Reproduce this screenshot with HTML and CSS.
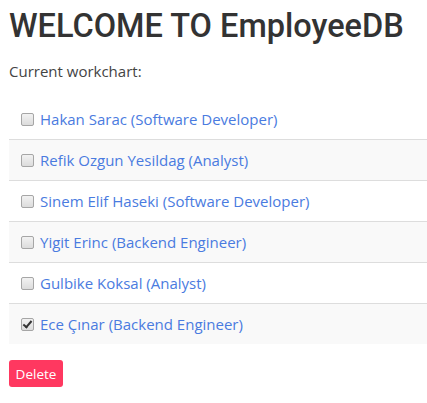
FILE: index.html
```html
<!DOCTYPE html>
<html>
<head>
<meta charset="utf-8">
<link rel="stylesheet" href="styles.css">
</head>
<body>
<div class="page">
  <h1 class="title">WELCOME TO EmployeeDB</h1>
  <p class="subtitle">Current workchart:</p>
  <table class="chart">
    <tbody>
      <tr><td><label class="item"><input type="checkbox"><a class="name">Hakan Sarac (Software Developer)</a></label></td></tr>
      <tr><td><label class="item"><input type="checkbox"><a class="name">Refik Ozgun Yesildag (Analyst)</a></label></td></tr>
      <tr><td><label class="item"><input type="checkbox"><a class="name">Sinem Elif Haseki (Software Developer)</a></label></td></tr>
      <tr><td><label class="item"><input type="checkbox"><a class="name">Yigit Erinc (Backend Engineer)</a></label></td></tr>
      <tr><td><label class="item"><input type="checkbox"><a class="name">Gulbike Koksal (Analyst)</a></label></td></tr>
      <tr><td><label class="item"><input type="checkbox" checked><a class="name">Ece Çınar (Backend Engineer)</a></label></td></tr>
    </tbody>
  </table>
  <button class="delete">Delete</button>
</div>
</body>
</html>
```
FILE: styles.css
```css
html, body {
  margin: 0;
  padding: 0;
  background: #fff;
}
body {
  font-family: "Open Sans", "Noto Sans", sans-serif;
  color: #333;
  font-size: 15px;
}
.page {
  padding: 0 0 0 9px;
}
.title {
  margin: 0;
  padding-top: 6px;
  font-family: Roboto, "Open Sans", sans-serif;
  font-size: 32.5px;
  font-weight: 500;
  line-height: 40px;
  color: #333;
  white-space: nowrap;
}
.subtitle {
  margin: 14px 0 0 0;
  line-height: 22px;
  color: #444;
}
.chart {
  width: 100%;
  border-collapse: collapse;
  margin-top: 17px;
}
.chart td {
  padding: 0 12px;
  height: 40px;
  border-top: 1px solid #ddd;
}
.chart tr:first-child td {
  border-top: none;
}
.chart tr:nth-child(even) td {
  background: #f9f9f9;
}
.item {
  display: flex;
  align-items: center;
}
.item input {
  -webkit-appearance: none;
  appearance: none;
  margin: 0 6px 0 0;
  width: 13px;
  height: 13px;
  border: 1px solid #a6a6a6;
  border-radius: 2px;
  background: linear-gradient(#f2f2f2, #dcdcdc);
  position: relative;
  flex: none;
}
.item input:checked::after {
  content: "";
  position: absolute;
  left: 3px;
  top: 0px;
  width: 3px;
  height: 7px;
  border: solid #333;
  border-width: 0 2px 2px 0;
  transform: rotate(40deg);
}
.name {
  color: #4a7be0;
  text-decoration: none;
}
.delete {
  margin-top: 16px;
  background: #ff3860;
  color: #fff;
  border: none;
  border-radius: 3px;
  font-family: "Open Sans", sans-serif;
  font-size: 13.5px;
  width: 54px;
  height: 27px;
  padding: 0;
}
```
